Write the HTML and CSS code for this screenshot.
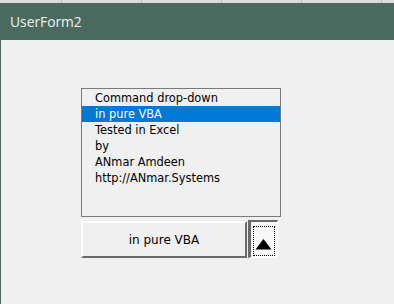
FILE: index.html
```html
<!DOCTYPE html>
<html lang="en">
<head>
  <meta charset="UTF-8" />
  <title>UserForm2</title>
  <link rel="stylesheet" href="styles.css">
</head>
<body>

  <div class="window">
    <div class="sheet-strip"></div>
    <div class="titlebar">UserForm2</div>

    <div class="client">
      <div class="dropdown">
        <ul class="listbox">
          <li>Command drop-down</li>
          <li class="selected">in pure VBA</li>
          <li>Tested in Excel</li>
          <li>by</li>
          <li>ANmar Amdeen</li>
          <li>http://ANmar.Systems</li>
        </ul>

        <div class="controls">
          <button class="main-btn">in pure VBA</button>
          <button class="toggle-btn">
            <span class="focus-rect">
              <svg width="20" height="28" viewBox="0 0 20 28">
                <polygon points="9.5,12 1.5,22.5 17.5,22.5" fill="#000" />
              </svg>
            </span>
          </button>
        </div>
      </div>
    </div>
  </div>

</body>
</html>
```

FILE: styles.css
```css
body {
  margin: 0;
  background: #F0F0F0;
  font-family: "DejaVu Sans", Verdana, sans-serif;
}

.window {
  width: 394px;
  height: 304px;
  overflow: hidden;
}

/* bit of the Excel sheet peeking above the form */
.sheet-strip {
  height: 3px;
  background:
    repeating-linear-gradient(90deg, transparent 0 60px, #B8B8B8 60px 61px, transparent 61px 80px),
    #DDDDDD;
  background-position: 1px 0, 0 0;
}

.titlebar {
  height: 37px;
  background: #4A6A60;
  color: #EEF3F1;
  font-family: "Open Sans", "Noto Sans", sans-serif;
  font-size: 13.8px;
  line-height: 37px;
  padding-left: 10px;
}

.client {
  height: 264px;
  border-left: 1px solid #4A6A60;
  background: #F0F0F0;
  padding: 48px 0 0 80px;
  box-sizing: border-box;
}

.dropdown {
  width: 200px;
}

.listbox {
  list-style: none;
  margin: 0;
  padding: 1px 0 0 0;
  width: 200px;
  height: 129px;
  box-sizing: border-box;
  border: 1px solid #7A7A7A;
  background: #F0F0F0;
  font-size: 11.4px;
  color: #000;
}

.listbox li {
  height: 16px;
  line-height: 16px;
  padding-left: 13px;
  white-space: nowrap;
}

.listbox li.selected {
  background: #0078D7;
  color: #FFFFFF;
}

.controls {
  display: flex;
  align-items: flex-start;
  gap: 1px;
  margin-top: 3px;
}

.main-btn {
  margin: 1px 0 0 0;
  width: 166px;
  height: 37px;
  box-sizing: border-box;
  border: 2px solid;
  border-color: #FFFFFF #696969 #696969 #FFFFFF;
  background: #F0F0F0;
  font-family: "DejaVu Sans", Verdana, sans-serif;
  font-size: 12px;
  color: #000;
  padding: 0;
}

.toggle-btn {
  margin: 0;
  padding: 4px 2px 1px 2px;
  width: 30px;
  height: 38px;
  box-sizing: border-box;
  border-style: solid;
  border-width: 2px 1px 1px 3px;
  border-color: #696969 #FFFFFF #FFFFFF #696969;
  background: #F9F9F9;
  display: flex;
  align-items: flex-start;
}

.focus-rect {
  display: block;
  width: 22px;
  height: 30px;
  box-sizing: border-box;
  border: 1px dotted #000;
}

.focus-rect svg {
  display: block;
}
```
